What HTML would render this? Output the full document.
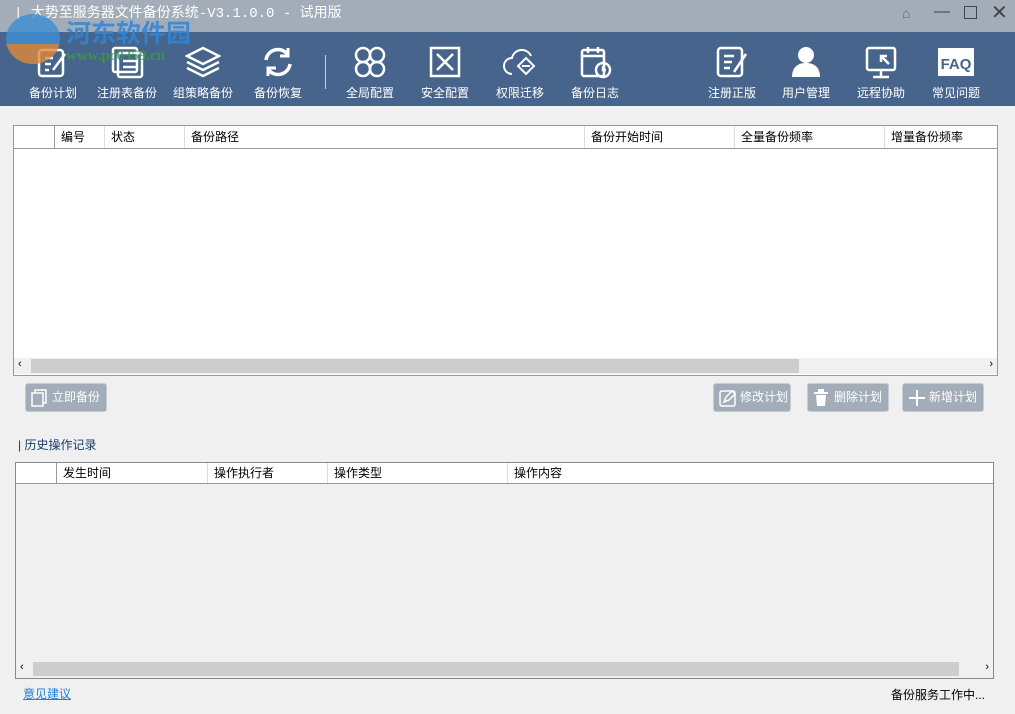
<!DOCTYPE html>
<html><head><meta charset="utf-8"><style>
*{margin:0;padding:0;box-sizing:border-box}
body{width:1015px;height:714px;background:#f0f0f0;font-family:"Liberation Sans","Noto Sans CJK SC",sans-serif;font-size:12px;color:#000;position:relative;overflow:hidden}
.abs{position:absolute}
#title{left:0;top:0;width:1015px;height:32px;background:#a3adba;color:#fff;font-family:"Liberation Mono","Noto Sans CJK SC",monospace;font-size:14px;line-height:28px;padding-left:14px}
#bar{left:0;top:32px;width:1015px;height:74px;background:#47658c}
.tb{position:absolute;top:32px;width:80px;text-align:center;color:#fff;font-size:12px}
.tb svg{display:block;margin:12px auto 0;width:36px;height:36px}
.tb span{display:block;margin-top:4px}
.t{position:absolute;background:#fff;border:1px solid #999}
.h{position:absolute;left:0;top:0;right:0;height:23px;border-bottom:1px solid #999;background:#fff}
.c{position:absolute;top:0;height:22px;line-height:22px;padding-left:6px;border-left:1px solid #ddd}
.sb{position:absolute;left:0;right:0;height:16px;background:#f0f0f0}
.th{position:absolute;top:1px;height:14px;background:#cdcdcd}
.btn{position:absolute;top:383px;height:29px;background:#a3adba;border:1px solid #c6ccd4;border-radius:3px;color:#fff;line-height:27px;font-size:12px;padding-left:26px}
.btn svg{position:absolute;left:5px;top:5px}
</style></head><body>
<div id="title" class="abs">| 大势至服务器文件备份系统-V3.1.0.0 - 试用版</div>
<div class="abs" style="left:902px;top:5px;color:#666;font-size:14px">⌂</div>
<div class="abs" style="left:934px;top:3px;color:#444;font-size:16px">—</div>
<div class="abs" style="left:964px;top:6px;width:13px;height:13px;border:1px solid #444"></div>
<div class="abs" style="left:991px;top:0px;color:#444;font-size:20px">✕</div>
<div id="bar" class="abs"></div>
<div class="abs" style="left:325px;top:55px;width:1px;height:34px;background:#ccd"></div>
<div class="tb" style="left:13px"><svg viewBox="0 0 36 36" fill="none" stroke="#fff" stroke-width="2.5"><rect x="4" y="6" width="24" height="26" rx="3"/><path d="M10 14h8M10 20h6M10 26h4M30 10L18 26"/></svg><span>备份计划</span></div>
<div class="tb" style="left:87px"><svg viewBox="0 0 36 36" fill="none" stroke="#fff" stroke-width="2.5"><rect x="4" y="4" width="24" height="24" rx="2"/><rect x="9" y="9" width="24" height="24" rx="2"/><path d="M14 17h14M14 23h14"/></svg><span>注册表备份</span></div>
<div class="tb" style="left:163px"><svg viewBox="0 0 36 36" fill="none" stroke="#fff" stroke-width="2.5"><path d="M18 4L34 12 18 20 2 12z"/><path d="M2 18l16 8 16-8M2 24l16 8 16-8"/></svg><span>组策略备份</span></div>
<div class="tb" style="left:238px"><svg viewBox="0 0 36 36" fill="none" stroke="#fff" stroke-width="3.5"><path d="M6 16a12 12 0 0 1 22-5M30 20a12 12 0 0 1-22 5"/><path d="M28 4v8h-8M8 32v-8h8" stroke-width="3"/></svg><span>备份恢复</span></div>
<div class="tb" style="left:330px"><svg viewBox="0 0 36 36" fill="none" stroke="#fff" stroke-width="2.5"><circle cx="11" cy="11" r="7"/><circle cx="25" cy="11" r="7"/><circle cx="11" cy="25" r="7"/><circle cx="25" cy="25" r="7"/></svg><span>全局配置</span></div>
<div class="tb" style="left:405px"><svg viewBox="0 0 36 36" fill="none" stroke="#fff" stroke-width="2.5"><rect x="4" y="4" width="28" height="28"/><path d="M10 10l16 16M26 10L10 26"/></svg><span>安全配置</span></div>
<div class="tb" style="left:480px"><svg viewBox="0 0 36 36" fill="none" stroke="#fff" stroke-width="2"><path d="M10 30a8 8 0 0 1 0-16 10 10 0 0 1 19-2"/><path d="M24 14l8 8-8 8-8-8z M20 22h8"/></svg><span>权限迁移</span></div>
<div class="tb" style="left:555px"><svg viewBox="0 0 36 36" fill="none" stroke="#fff" stroke-width="2.5"><rect x="5" y="6" width="22" height="26" rx="2"/><path d="M11 3v6M21 3v6M5 12h22"/><circle cx="26" cy="26" r="7"/><path d="M26 22v4h3"/></svg><span>备份日志</span></div>
<div class="tb" style="left:692px"><svg viewBox="0 0 36 36" fill="none" stroke="#fff" stroke-width="2.5"><rect x="4" y="4" width="24" height="28" rx="3"/><path d="M10 12h10M10 18h8M10 24h6M32 10L20 28"/></svg><span>注册正版</span></div>
<div class="tb" style="left:766px"><svg viewBox="0 0 36 36" fill="#fff"><circle cx="18" cy="11" r="8"/><path d="M4 33c0-10 6-14 14-14s14 4 14 14z"/></svg><span>用户管理</span></div>
<div class="tb" style="left:841px"><svg viewBox="0 0 36 36" fill="none" stroke="#fff" stroke-width="2.5"><rect x="4" y="4" width="28" height="22" rx="2"/><path d="M18 26v6M10 33h16M26 20l-8-8M18 18v-6h6"/></svg><span>远程协助</span></div>
<div class="tb" style="left:916px"><svg viewBox="0 0 36 36" style="width:44px"><rect x="0" y="4" width="36" height="28" fill="#fff"/><text x="18" y="25" text-anchor="middle" font-family="Liberation Sans" font-weight="bold" font-size="15" fill="#47658c">FAQ</text></svg><span>常见问题</span></div>
<div class="abs" style="left:6px;top:14px;width:54px;height:50px;border-radius:50%;background:#3c8fd4;opacity:.8;overflow:hidden"><div style="position:absolute;left:0;top:30px;width:54px;height:20px;background:#e08a3a"></div></div>
<div class="abs" style="left:66px;top:14px;color:#2f86d8;font-size:25px;font-weight:bold;opacity:.85">河东软件园</div>
<div class="abs" style="left:66px;top:48px;color:#3aa03a;font-size:15px;font-weight:bold;opacity:.75;font-family:'Liberation Serif',serif">www.pc0359.cn</div>

<div class="t" style="left:13px;top:125px;width:985px;height:251px">
<div class="h"><div class="c" style="left:40px;border-left:1px solid #999">编号</div><div class="c" style="left:90px">状态</div><div class="c" style="left:170px">备份路径</div><div class="c" style="left:570px">备份开始时间</div><div class="c" style="left:720px">全量备份频率</div><div class="c" style="left:870px">增量备份频率</div></div>
<div class="sb" style="top:232px"><div class="th" style="left:17px;width:768px"></div><span class="abs" style="left:4px;top:0;font-size:11px">‹</span><span class="abs" style="right:4px;top:0;font-size:11px">›</span></div>
</div>
<div class="btn" style="left:25px;width:82px"><svg width="16" height="18" fill="none" stroke="#fff" stroke-width="1.5"><rect x="1" y="4" width="11" height="13"/><path d="M4 4V1h11v13h-3"/></svg>立即备份</div>
<div class="btn" style="left:713px;width:78px"><svg width="18" height="18" fill="none" stroke="#fff" stroke-width="1.5"><rect x="1" y="2" width="15" height="15" rx="2"/><path d="M5 13l2-5 6-6 3 3-6 6z"/></svg>修改计划</div>
<div class="btn" style="left:807px;width:82px"><svg width="16" height="18" fill="#fff"><rect x="1" y="3" width="14" height="2"/><rect x="5" y="0" width="6" height="3"/><path d="M3 6h10l-1 11H4z"/></svg>删除计划</div>
<div class="btn" style="left:902px;width:82px"><svg width="18" height="18" stroke="#fff" stroke-width="2"><path d="M9 1v16M1 9h16"/></svg>新增计划</div>
<div class="abs" style="left:18px;top:436px;color:#1a3a6a;font-size:12px">| 历史操作记录</div>
<div class="t" style="left:15px;top:462px;width:979px;height:217px;background:#f0f0f0;border-color:#888">
<div class="h" style="height:21px"><div class="c" style="left:40px;height:20px;line-height:20px;border-left:1px solid #999">发生时间</div><div class="c" style="left:191px;height:20px;line-height:20px">操作执行者</div><div class="c" style="left:311px;height:20px;line-height:20px">操作类型</div><div class="c" style="left:491px;height:20px;line-height:20px">操作内容</div></div>
<div class="sb" style="top:198px"><div class="th" style="left:17px;width:926px"></div><span class="abs" style="left:4px;top:0;font-size:11px">‹</span><span class="abs" style="right:4px;top:0;font-size:11px">›</span></div>
</div>
<div class="abs" style="left:23px;top:685px;color:#1e7fd8;text-decoration:underline">意见建议</div>
<div class="abs" style="left:891px;top:686px">备份服务工作中...</div>
</body></html>
